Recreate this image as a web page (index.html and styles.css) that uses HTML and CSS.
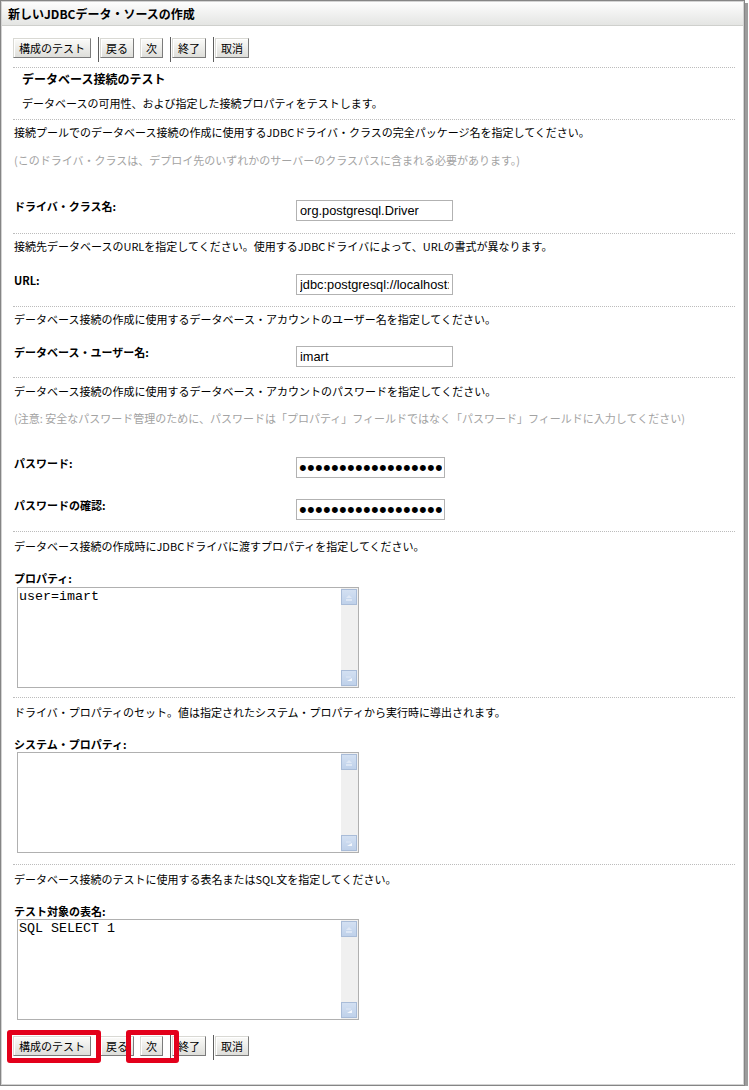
FILE: index.html
```html
<!DOCTYPE html>
<html lang="ja">
<head>
<meta charset="utf-8">
<title>新しいJDBCデータ・ソースの作成</title>
<link rel="stylesheet" href="styles.css">
</head>
<body>
<div class="window">
  <div class="frame">
    <div class="titlebar">新しいJDBCデータ・ソースの作成</div>
    <div class="content">
      <div class="toolbar">
        <button class="btn">構成のテスト</button>
        <span class="sep"></span>
        <button class="btn">戻る</button>
        <button class="btn btn-gap">次</button>
        <span class="sep"></span>
        <button class="btn">終了</button>
        <span class="sep"></span>
        <button class="btn">取消</button>
      </div>

      <section class="sec sec-intro">
        <h2 class="heading">データベース接続のテスト</h2>
        <p class="desc">データベースの可用性、および指定した接続プロパティをテストします。</p>
      </section>

      <section class="sec sec-driver">
        <p class="text">接続プールでのデータベース接続の作成に使用するJDBCドライバ・クラスの完全パッケージ名を指定してください。</p>
        <p class="text note">(このドライバ・クラスは、デプロイ先のいずれかのサーバーのクラスパスに含まれる必要があります。)</p>
        <div class="field field-driver">
          <label class="field-label">ドライバ・クラス名:</label>
          <input class="input" type="text" value="org.postgresql.Driver">
        </div>
      </section>

      <section class="sec sec-url">
        <p class="text">接続先データベースのURLを指定してください。使用するJDBCドライバによって、URLの書式が異なります。</p>
        <div class="field field-url">
          <label class="field-label">URL:</label>
          <input class="input" type="text" value="jdbc:postgresql://localhost:5432/imart">
        </div>
      </section>

      <section class="sec sec-user">
        <p class="text">データベース接続の作成に使用するデータベース・アカウントのユーザー名を指定してください。</p>
        <div class="field field-user">
          <label class="field-label">データベース・ユーザー名:</label>
          <input class="input" type="text" value="imart">
        </div>
      </section>

      <section class="sec sec-pw">
        <p class="text">データベース接続の作成に使用するデータベース・アカウントのパスワードを指定してください。</p>
        <p class="text note note-pw">(注意: 安全なパスワード管理のために、パスワードは「プロパティ」フィールドではなく「パスワード」フィールドに入力してください)</p>
        <div class="field field-pw">
          <label class="field-label">パスワード:</label>
          <input class="input input-pw" type="password" value="imartimartimartimar">
        </div>
        <div class="field field-confirm">
          <label class="field-label">パスワードの確認:</label>
          <input class="input input-pw" type="password" value="imartimartimartimar">
        </div>
      </section>

      <section class="sec sec-area sec-props">
        <p class="text">データベース接続の作成時にJDBCドライバに渡すプロパティを指定してください。</p>
        <label class="area-label">プロパティ:</label>
        <div class="area">
          <textarea class="area-text">user=imart</textarea>
          <div class="scroll">
            <span class="scroll-btn"><svg width="14" height="14" viewBox="0 0 14 14"><path d="M4 8 L7 5 L10 8 Z" fill="#dfe8f5"/><path d="M4 10 H10" stroke="#f4f8fd" stroke-width="1"/></svg></span>
            <span class="scroll-btn"><svg width="14" height="14" viewBox="0 0 14 14"><path d="M5 10 L10 7 L10 10 Z" fill="#f4f8fd"/><path d="M4 6 H9" stroke="#dfe8f5" stroke-width="1"/></svg></span>
          </div>
        </div>
      </section>

      <section class="sec sec-area">
        <p class="text">ドライバ・プロパティのセット。値は指定されたシステム・プロパティから実行時に導出されます。</p>
        <label class="area-label">システム・プロパティ:</label>
        <div class="area">
          <textarea class="area-text"></textarea>
          <div class="scroll">
            <span class="scroll-btn"><svg width="14" height="14" viewBox="0 0 14 14"><path d="M4 8 L7 5 L10 8 Z" fill="#dfe8f5"/><path d="M4 10 H10" stroke="#f4f8fd" stroke-width="1"/></svg></span>
            <span class="scroll-btn"><svg width="14" height="14" viewBox="0 0 14 14"><path d="M5 10 L10 7 L10 10 Z" fill="#f4f8fd"/><path d="M4 6 H9" stroke="#dfe8f5" stroke-width="1"/></svg></span>
          </div>
        </div>
      </section>

      <section class="sec sec-area sec-last">
        <p class="text">データベース接続のテストに使用する表名またはSQL文を指定してください。</p>
        <label class="area-label">テスト対象の表名:</label>
        <div class="area">
          <textarea class="area-text">SQL SELECT 1</textarea>
          <div class="scroll">
            <span class="scroll-btn"><svg width="14" height="14" viewBox="0 0 14 14"><path d="M4 8 L7 5 L10 8 Z" fill="#dfe8f5"/><path d="M4 10 H10" stroke="#f4f8fd" stroke-width="1"/></svg></span>
            <span class="scroll-btn"><svg width="14" height="14" viewBox="0 0 14 14"><path d="M5 10 L10 7 L10 10 Z" fill="#f4f8fd"/><path d="M4 6 H9" stroke="#dfe8f5" stroke-width="1"/></svg></span>
          </div>
        </div>
      </section>

      <div class="toolbar toolbar-bottom">
        <button class="btn">構成のテスト</button>
        <span class="sep"></span>
        <button class="btn">戻る</button>
        <button class="btn btn-gap">次</button>
        <span class="sep"></span>
        <button class="btn">終了</button>
        <span class="sep"></span>
        <button class="btn">取消</button>
        <span class="mark mark-test"></span>
        <span class="mark mark-next"></span>
      </div>
    </div>
  </div>
</div>
</body>
</html>
```

FILE: styles.css
```css
html, body {
  margin: 0;
  padding: 0;
  background: #ffffff;
}

body {
  font-family: "Noto Sans CJK JP", "Liberation Sans", sans-serif;
  font-size: 11px;
  color: #000000;
}

.window {
  width: 745px;
  height: 1086px;
  box-sizing: border-box;
  border: 1px solid #858585;
  box-shadow: 3px 3px 0 #9c9c9c;
  background: #ffffff;
}

.frame {
  height: 100%;
  box-sizing: border-box;
  border: 1px solid #d3d3d3;
}

.titlebar {
  height: 23px;
  line-height: 23px;
  padding-left: 6px;
  font-size: 12px;
  font-weight: bold;
  background: linear-gradient(#fdfdfd, #e4e5e3);
  border-bottom: 1px solid #cfd0cd;
}

.content {
  padding: 11px 8px 0 11px;
}

/* toolbar */
.toolbar {
  display: flex;
  align-items: flex-start;
  height: 30px;
  position: relative;
}

.toolbar-bottom {
  padding-top: 5px;
}

.btn {
  margin: 1px 0 0 0;
  height: 20px;
  padding: 0 5px;
  font-family: "Noto Sans CJK JP", sans-serif;
  font-size: 11px;
  line-height: 18px;
  color: #000;
  border: 1px solid;
  border-color: #d9d9d4 #7b7b7b #7b7b7b #d9d9d4;
  background: linear-gradient(#fbfbf9, #dededa);
  box-shadow: inset 1px 1px 0 #ffffff;
  border-radius: 0;
}

.btn-gap {
  margin-left: 6px;
}

.sep {
  width: 1px;
  height: 25px;
  background: #5e5e5e;
  margin: 0 1px 0 7px;
}

.mark {
  position: absolute;
  top: 0;
  height: 33px;
  box-sizing: border-box;
  border: 5px solid #e3001b;
  border-radius: 3px;
}

.mark-test {
  left: -6px;
  width: 94px;
}

.mark-next {
  left: 113px;
  width: 53px;
}

/* sections */
.sec {
  border-top: 1px dotted #bcbcbc;
}

.heading {
  margin: 0;
  height: 22px;
  line-height: 22px;
  padding-left: 9px;
  font-size: 12px;
  font-weight: bold;
}

.desc {
  margin: 2px 0 0 0;
  height: 22px;
  line-height: 22px;
  padding-left: 9px;
}

.sec-intro {
  padding-bottom: 5px;
}

.text {
  margin: 0;
  height: 24px;
  line-height: 24px;
  padding-left: 1px;
  white-space: nowrap;
}

.note {
  margin-top: 4px;
  color: #a3a3a3;
}

.note-pw {
  margin-top: 3px;
}

.field {
  display: flex;
  align-items: flex-start;
  margin-top: 12px;
}

.field-label {
  width: 283px;
  box-sizing: border-box;
  padding-left: 1px;
  line-height: 20px;
  font-weight: bold;
}

.input {
  margin: 4px 0 0 0;
  width: 157px;
  height: 21px;
  box-sizing: border-box;
  border: 1px solid #b2b2b2;
  padding: 0 3px;
  font-family: "Liberation Sans", sans-serif;
  font-size: 12.8px;
  color: #000;
  background: #fff;
  outline: none;
}

.input-pw {
  width: 149px;
  padding: 0 2px;
  font-size: 22px;
  letter-spacing: 0.3px;
}

.sec-driver {
  padding-bottom: 12px;
}

.field-driver {
  margin-top: 24px;
}

.sec-url {
  padding-bottom: 11px;
}

.sec-user {
  padding-bottom: 10px;
}

.field-user {
  margin-top: 11px;
}

.sec-pw {
  padding-top: 1px;
  padding-bottom: 11px;
}

.field-pw {
  margin-top: 23px;
}

.field-confirm {
  margin-top: 17px;
}

/* text areas */
.sec-area {
  padding-top: 2px;
  padding-bottom: 11px;
}

.sec-last {
  padding-bottom: 10px;
}

.sec-props {
  padding-bottom: 9px;
}

.sec-props .area {
  margin-top: 1px;
}

.area-label {
  display: block;
  margin-top: 12px;
  height: 16px;
  line-height: 16px;
  padding-left: 1px;
  font-weight: bold;
}

.area {
  display: flex;
  margin-left: 4px;
  width: 342px;
  height: 101px;
  box-sizing: border-box;
  border: 1px solid #b0b0b0;
}

.area-text {
  flex: 1;
  border: none;
  resize: none;
  outline: none;
  overflow: hidden;
  margin: 0;
  padding: 1px 1px;
  font-family: "Liberation Mono", monospace;
  font-size: 13.33px;
  line-height: 16px;
  color: #000;
  background: #fff;
}

.scroll {
  width: 17px;
  display: flex;
  flex-direction: column;
  justify-content: space-between;
  padding: 1px 0;
  background: #f0f0f0;
}

.scroll-btn {
  display: flex;
  align-items: center;
  justify-content: center;
  width: 16px;
  height: 16px;
  box-sizing: border-box;
  border: 1px solid #a9bcd8;
  background: linear-gradient(#d3e0f2, #bfd1ea);
}
```
